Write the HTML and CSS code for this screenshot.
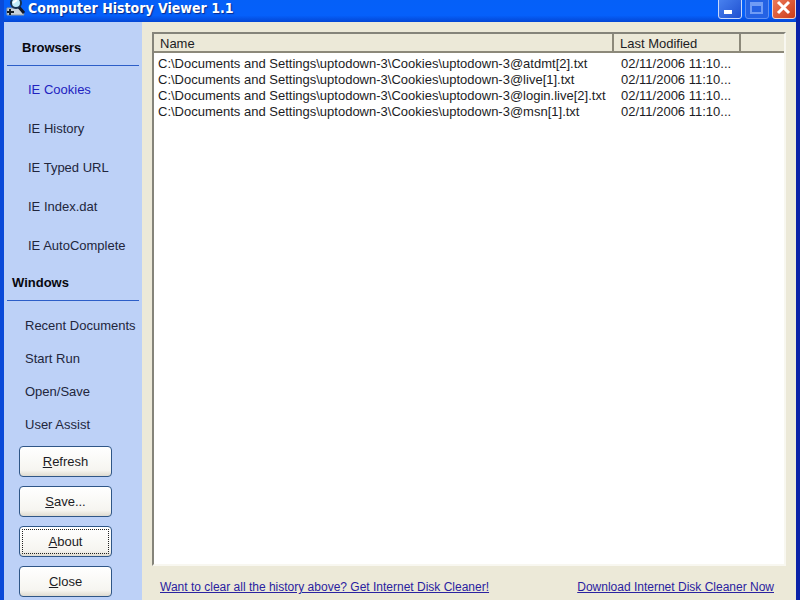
FILE: index.html
```html
<!DOCTYPE html>
<html lang="en">
<head>
    <meta charset="UTF-8">
    <meta name="viewport" content="width=device-width, initial-scale=1.0">
    <title>Computer History Viewer 1.1</title>
    <link rel="stylesheet" href="styles.css">
</head>
<body>
    <div class="window">
        <header class="titlebar">
            <svg class="app-icon" width="20" height="16" viewBox="0 0 20 16" aria-hidden="true">
                <path d="M1 8h14l3 7H1z" fill="#c9d3dc" stroke="#8b99a5"/>
                <path d="M1 12h7M4 9v6" stroke="#16202a" stroke-width="2"/>
                <path d="M12 6l6 7" stroke="#10182a" stroke-width="3"/>
                <circle cx="10" cy="3" r="5" fill="#bfeaf8" stroke="#17314f" stroke-width="2"/>
                <path d="M7 3l4-3" stroke="#fff" stroke-width="2"/>
            </svg>
            <h1>Computer History Viewer 1.1</h1>
            <div class="window-buttons">
                <button class="win-btn" aria-label="Minimize">
                    <svg width="22" height="20" viewBox="0 0 22 20"><path d="M5 12h8v4H5z" fill="#fff"/></svg>
                </button>
                <button class="win-btn maximize" aria-label="Maximize" disabled>
                    <svg width="22" height="20" viewBox="0 0 22 20"><path d="M5 5h11v10H5zM5 7h11" fill="none" stroke="#6f9cf5" stroke-width="2"/></svg>
                </button>
                <button class="win-btn close" aria-label="Close window">
                    <svg width="22" height="20" viewBox="0 0 22 20"><path d="M5 4l11 11M16 4L5 15" stroke="#fff" stroke-width="3"/></svg>
                </button>
            </div>
        </header>

        <div class="content">
            <aside class="sidebar">
                <h2 class="browsers-title">Browsers</h2>
                <nav class="browser-links">
                    <a href="#cookies" class="active">IE Cookies</a>
                    <a href="#history">IE History</a>
                    <a href="#typed">IE Typed URL</a>
                    <a href="#index">IE Index.dat</a>
                    <a href="#autocomplete">IE AutoComplete</a>
                </nav>
                <h2>Windows</h2>
                <nav class="windows-links">
                    <a href="#recent">Recent Documents</a>
                    <a href="#run">Start Run</a>
                    <a href="#opensave">Open/Save</a>
                    <a href="#assist">User Assist</a>
                </nav>
                <div class="actions">
                    <button><u>R</u>efresh</button>
                    <button><u>S</u>ave...</button>
                    <button class="focused"><u>A</u>bout</button>
                    <button><u>C</u>lose</button>
                </div>
            </aside>

            <main class="main">
                <div class="list">
                    <table>
                        <thead>
                            <tr>
                                <th class="col-name">Name</th>
                                <th class="col-date">Last Modified</th>
                                <td class="col-rest"></td>
                            </tr>
                        </thead>
                        <tbody>
                            <tr>
                                <td>C:\Documents and Settings\uptodown-3\Cookies\uptodown-3@atdmt[2].txt</td>
                                <td>02/11/2006 11:10...</td>
                                <td></td>
                            </tr>
                            <tr>
                                <td>C:\Documents and Settings\uptodown-3\Cookies\uptodown-3@live[1].txt</td>
                                <td>02/11/2006 11:10...</td>
                                <td></td>
                            </tr>
                            <tr>
                                <td>C:\Documents and Settings\uptodown-3\Cookies\uptodown-3@login.live[2].txt</td>
                                <td>02/11/2006 11:10...</td>
                                <td></td>
                            </tr>
                            <tr>
                                <td>C:\Documents and Settings\uptodown-3\Cookies\uptodown-3@msn[1].txt</td>
                                <td>02/11/2006 11:10...</td>
                                <td></td>
                            </tr>
                        </tbody>
                    </table>
                </div>
                <footer class="footer">
                    <a href="#cleaner">Want to clear all the history above? Get Internet Disk Cleaner!</a>
                    <a href="#download">Download Internet Disk Cleaner Now</a>
                </footer>
            </main>
        </div>
    </div>
</body>
</html>
```

FILE: styles.css
```css
* {
    box-sizing: border-box;
}
body {
    margin: 0;
    font-family: "Liberation Sans", Arial, sans-serif;
    font-size: 13px;
    color: #1c1c24;
}
.window {
    display: flex;
    flex-direction: column;
    height: 100vh;
    overflow: hidden;
    background-color: #ece9d8;
    border-left: 4px solid #0a4ad8;
    border-right: 4px solid #0a22a8;
}

/* title bar */
.titlebar {
    display: flex;
    align-items: flex-start;
    height: 22px;
    flex-shrink: 0;
    margin: 0 -4px;
    padding: 0 4px 0 6px;
    background: linear-gradient(#0560f8, #0560fb 70%, #0446d4);
}
.titlebar h1 {
    flex: 1;
    margin: 0 0 0 2px;
    font-family: "DejaVu Sans Condensed", "DejaVu Sans", sans-serif;
    font-size: 14px;
    line-height: 17px;
    color: #fff;
    text-shadow: 1px 1px 1px #0a2a8c;
}
.window-buttons {
    display: flex;
    gap: 3px;
    margin-top: -3px;
}
.win-btn {
    width: 24px;
    height: 22px;
    padding: 0;
    overflow: hidden;
    border: 1px solid #c8d8fb;
    border-radius: 3px;
    background: linear-gradient(135deg, #4a83f0, #1f50d0);
}
.win-btn svg {
    display: block;
}
.win-btn.maximize {
    border-color: #5f90f2;
    background: #2462e4;
}
.win-btn.close {
    border-color: #f3d5cf;
    background: linear-gradient(135deg, #ee7c5c, #cc3c18);
}

.content {
    display: flex;
    flex: 1;
    min-height: 0;
}

/* sidebar */
.sidebar {
    width: 138px;
    flex-shrink: 0;
    padding: 0 3px;
    background-color: #bdd1f7;
}
.sidebar h2 {
    margin: 0;
    padding: 0 5px;
    height: 36px;
    border-bottom: 1px solid #2c5ec8;
    font-size: 13px;
    line-height: 36px;
    color: #08080e;
}
.sidebar .browsers-title {
    height: 44px;
    padding: 8px 15px 0;
}
.sidebar nav a {
    display: block;
    color: #22263c;
    text-decoration: none;
    white-space: nowrap;
}
.sidebar nav a.active {
    color: #2222c0;
}
.browser-links {
    padding: 4px 0 0 21px;
}
.browser-links a {
    line-height: 39px;
}
.windows-links {
    padding: 8px 0 0 18px;
}
.windows-links a {
    line-height: 33px;
}
.actions {
    display: flex;
    flex-direction: column;
    gap: 9px;
    padding: 5px 27px 0 12px;
}
.actions button {
    height: 31px;
    border: 1px solid #2f5687;
    border-radius: 4px;
    background: linear-gradient(#fff, #f6f5f0 80%, #dedbd0);
    font-family: inherit;
    font-size: 13px;
    color: #1c1c24;
}
.actions .focused {
    outline: 1px dotted #222;
    outline-offset: -4px;
}

/* file list */
.main {
    display: flex;
    flex-direction: column;
    flex: 1;
    min-width: 0;
    padding: 10px 10px 0;
}
.list {
    flex: 1;
    overflow: hidden;
    background-color: #fff;
    border: 2px solid;
    border-color: #85847a #f8f7f0 #f8f7f0 #85847a;
}
.list table {
    width: 100%;
    border-collapse: separate;
    border-spacing: 0;
    table-layout: fixed;
}
.list thead th,
.list thead td {
    height: 19px;
    padding: 2px 6px 0;
    background-color: #ece9d8;
    border-right: 2px solid #8c897a;
    border-bottom: 2px solid #8c897a;
    font-weight: normal;
    text-align: left;
}
.list thead .col-rest {
    border-right: none;
}
.col-date {
    width: 127px;
}
.col-rest {
    width: 43px;
}
.list tbody td {
    height: 16px;
    padding: 0 4px;
    line-height: 16px;
    white-space: nowrap;
}
.list tbody td + td {
    padding-left: 7px;
}
.list tbody tr:first-child td {
    padding-top: 3px;
}
.footer {
    display: flex;
    justify-content: space-between;
    height: 34px;
    padding: 0 12px 0 8px;
    font-size: 12px;
    line-height: 42px;
}
.footer a {
    color: #2a22a0;
}
```
